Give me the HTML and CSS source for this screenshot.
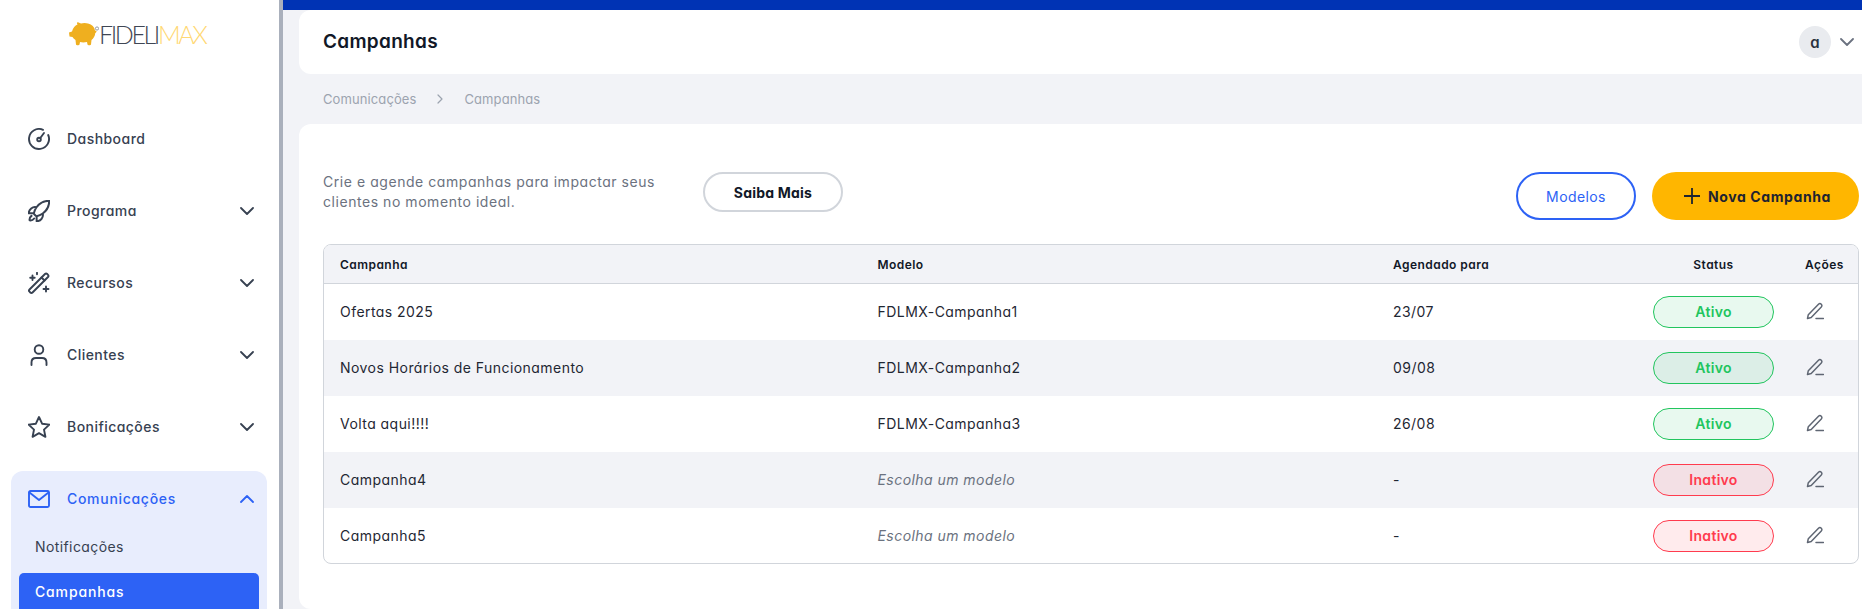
FILE: index.html
```html
<!DOCTYPE html>
<html lang="pt-BR">
<head>
<meta charset="utf-8">
<title>Campanhas</title>
<link rel="stylesheet" href="styles.css">
</head>
<body>
<aside class="sidebar">
  <div class="logo">
    <svg class="pig" width="31" height="24" viewBox="0 0 31 24"><path fill="#efaf1f" d="M1 10.500 4 9.500C5 6 7 3.500 9.500 2.500 8.500 1 9 0 10.500 .5L13 1.500C15 .8 18 .8 20 1.500 24 2.500 26.500 5 27 8.500L28.500 9C28.500 10 28 10.700 27.300 11 27 14 25.500 16.500 23.500 18L23 22.500C23 23.500 19.500 23.500 19.500 22.500L19 20C16.500 20.500 14 20.500 12 20L11.500 22.500C11.500 23.500 8 23.500 8 22.500L7.500 18C6 17 5 16 4.500 15L1.500 14.500Z"/><circle cx="29" cy="6.500" r="1.600" fill="none" stroke="#6b7280" stroke-width=".7"/></svg>
    <span class="logo-text"><span class="logo-dark">FIDELI</span><span class="logo-gold">MAX</span></span>
  </div>
  <nav class="menu">
    <a class="menu-item">
      <svg class="ico" viewBox="0 0 22 22"><path d="M15 1.800A10 10 0 1 0 20.200 7"/><circle cx="11" cy="11.500" r="1.800"/><path d="M12.300 10 16 5"/></svg>
      <span class="label">Dashboard</span>
    </a>
    <a class="menu-item">
      <svg class="ico" viewBox="1.500 1.500 21 21"><path d="M15.590 14.370a6 6 0 0 1-5.840 7.380v-4.800m5.840-2.580a14.980 14.980 0 0 0 6.160-12.120A14.980 14.980 0 0 0 9.631 8.410m5.960 5.960a14.926 14.926 0 0 1-5.841 2.580m-.119-8.540a6 6 0 0 0-7.381 5.840h4.800m2.581-5.840a14.927 14.927 0 0 0-2.580 5.840m2.699 2.700c-.103.021-.207.041-.311.060a15.090 15.090 0 0 1-2.448-2.448 14.900 14.900 0 0 1 .060-.312m-2.240 2.390a4.493 4.493 0 0 0-1.757 4.306 4.493 4.493 0 0 0 4.306-1.758"/></svg>
      <span class="label">Programa</span>
      <svg class="chev" viewBox="0 0 14 8"><path d="M1 1l6 6 6-6"/></svg>
    </a>
    <a class="menu-item">
      <svg class="ico" viewBox="0 0 22 22"><path d="M1.500 17.500 17 2c.7-.7 1.500-.7 2.200 0l.8.8c.7.7.7 1.500 0 2.200L4.500 20.500c-.7.7-1.500.7-2.200 0l-.8-.8c-.7-.7-.7-1.500 0-2.200Z"/><path d="M13.500 5.500l3 3"/><path d="M4.500 3.500v4.500M2.200 5.700h4.500M9 .8v1.500M18 14.500v5M15.500 17h5"/></svg>
      <span class="label">Recursos</span>
      <svg class="chev" viewBox="0 0 14 8"><path d="M1 1l6 6 6-6"/></svg>
    </a>
    <a class="menu-item">
      <svg class="ico" viewBox="0 0 22 22"><circle cx="11" cy="5.500" r="4.300"/><path d="M3.500 21v-2.500c0-3 2-4.500 4.500-4.500h6c2.500 0 4.500 1.500 4.500 4.500V21"/></svg>
      <span class="label">Clientes</span>
      <svg class="chev" viewBox="0 0 14 8"><path d="M1 1l6 6 6-6"/></svg>
    </a>
    <a class="menu-item">
      <svg class="ico" viewBox="1 1 22 22"><path d="M12 2l3.100 6.700 7.300.9-5.400 5 1.400 7.200L12 18.200l-6.400 3.600L7 14.600l-5.400-5 7.300-.9z"/></svg>
      <span class="label">Bonificações</span>
      <svg class="chev" viewBox="0 0 14 8"><path d="M1 1l6 6 6-6"/></svg>
    </a>
    <div class="group">
      <a class="menu-item group-head">
        <svg class="ico" viewBox="0 0 22 18"><rect x="1" y="1" width="20" height="16" rx="1.500"/><path d="M1.500 2.500 11 10l9.500-7.500"/></svg>
        <span class="label">Comunicações</span>
        <svg class="chev" viewBox="0 0 14 8"><path d="M1 7l6-6 6 6"/></svg>
      </a>
      <a class="sub">Notificações</a>
      <a class="sub sub-active">Campanhas</a>
    </div>
  </nav>
</aside>
<div class="main">
  <div class="topbar"></div>
  <header class="head">
    <h1 class="title">Campanhas</h1>
    <div class="user">
      <span class="avatar">a</span>
      <svg class="user-chev" viewBox="0 0 14 8"><path d="M1 1l6 6 6-6"/></svg>
    </div>
  </header>
  <div class="crumbs">
    <span>Comunicações</span>
    <svg class="crumb-sep" viewBox="0 0 6 10"><path d="M1 1l4 4-4 4"/></svg>
    <span>Campanhas</span>
  </div>
  <section class="card">
    <div class="toolbar">
      <p class="desc">Crie e agende campanhas para impactar seus clientes no momento ideal.</p>
      <button class="btn-more">Saiba Mais</button>
      <div class="actions">
        <button class="btn-models">Modelos</button>
        <button class="btn-new">
          <svg class="plus" viewBox="0 0 16 16"><path d="M8 0v16M0 8h16"/></svg>
          <span>Nova Campanha</span>
        </button>
      </div>
    </div>
    <div class="table-wrap">
      <table class="table">
        <colgroup><col class="c1"><col class="c2"><col class="c3"><col class="c4"><col class="c5"></colgroup>
        <thead>
          <tr><th>Campanha</th><th>Modelo</th><th>Agendado para</th><th class="center">Status</th><th class="th-act">Ações</th></tr>
        </thead>
        <tbody>
          <tr><td>Ofertas 2025</td><td>FDLMX-Campanha1</td><td>23/07</td><td class="center"><span class="pill on">Ativo</span></td><td class="td-act"><svg class="edit" viewBox="0 0 18 18"><path d="M1.500 16.500l.8-3.800L12.500 2.200c.8-.8 2-.8 2.800 0 .8.800.8 2 0 2.800L5.200 15.500z"/><path d="M10 16.500h7.500"/></svg></td></tr>
          <tr><td>Novos Horários de Funcionamento</td><td>FDLMX-Campanha2</td><td>09/08</td><td class="center"><span class="pill on">Ativo</span></td><td class="td-act"><svg class="edit" viewBox="0 0 18 18"><path d="M1.500 16.500l.8-3.800L12.500 2.200c.8-.8 2-.8 2.800 0 .8.800.8 2 0 2.800L5.200 15.500z"/><path d="M10 16.500h7.500"/></svg></td></tr>
          <tr><td>Volta aqui!!!!</td><td>FDLMX-Campanha3</td><td>26/08</td><td class="center"><span class="pill on">Ativo</span></td><td class="td-act"><svg class="edit" viewBox="0 0 18 18"><path d="M1.500 16.500l.8-3.800L12.500 2.200c.8-.8 2-.8 2.800 0 .8.800.8 2 0 2.800L5.200 15.500z"/><path d="M10 16.500h7.500"/></svg></td></tr>
          <tr><td>Campanha4</td><td class="muted">Escolha um modelo</td><td>-</td><td class="center"><span class="pill off">Inativo</span></td><td class="td-act"><svg class="edit" viewBox="0 0 18 18"><path d="M1.500 16.500l.8-3.800L12.500 2.200c.8-.8 2-.8 2.800 0 .8.800.8 2 0 2.800L5.200 15.500z"/><path d="M10 16.500h7.500"/></svg></td></tr>
          <tr><td>Campanha5</td><td class="muted">Escolha um modelo</td><td>-</td><td class="center"><span class="pill off">Inativo</span></td><td class="td-act"><svg class="edit" viewBox="0 0 18 18"><path d="M1.500 16.500l.8-3.800L12.500 2.200c.8-.8 2-.8 2.800 0 .8.800.8 2 0 2.800L5.200 15.500z"/><path d="M10 16.500h7.500"/></svg></td></tr>
        </tbody>
      </table>
    </div>
  </section>
</div>
</body>
</html>
```
FILE: styles.css
```css
* { box-sizing: border-box; }
html, body { margin: 0; height: 609px; overflow: hidden; }
body {
  display: flex;
  background: #f2f3f7;
  font-family: Inter, "Liberation Sans", sans-serif;
  font-feature-settings: "cv11" 1;
  font-size: 14px;
  color: #1f2937;
}
.sidebar {
  width: 283px;
  flex: none;
  height: 609px;
  overflow: hidden;
  background: #fff;
  border-right: 4px solid #aab0bc;
}
.logo {
  height: 103px;
  padding: 22px 0 0 68px;
  display: flex;
  align-items: flex-start;
}
.pig { display: block; flex: none; }
.logo-text {
  font-family: Lato, sans-serif;
  font-feature-settings: normal;
  font-weight: 300;
  font-size: 25px;
  line-height: 24px;
  letter-spacing: -2.400px;
}
.logo-dark { color: #3f4654; }
.logo-gold { color: #ffd873; }
.menu { display: flex; flex-direction: column; }
.menu-item {
  display: flex;
  align-items: center;
  height: 72px;
  padding: 0 25px 0 28px;
  color: #374151;
  font-weight: 500;
  letter-spacing: .45px;
}
.ico {
  width: 22px;
  height: 22px;
  flex: none;
  fill: none;
  stroke: currentColor;
  stroke-width: 1.900;
  stroke-linecap: round;
  stroke-linejoin: round;
}
.label { margin-left: 17px; flex: 1; padding-bottom: 1px; }
.chev {
  width: 14px;
  height: 8px;
  flex: none;
  fill: none;
  stroke: currentColor;
  stroke-width: 1.800;
  stroke-linecap: round;
  stroke-linejoin: round;
}
.group {
  margin: 8px 12px 0 11px;
  height: 200px;
  background: #e8edfd;
  border-radius: 12px;
}
.group-head {
  height: 56px;
  padding: 0 13px 0 17px;
  color: #2d62f5;
  letter-spacing: .7px;
}
.sub {
  display: flex;
  align-items: center;
  height: 38px;
  margin: 0 8px;
  padding-left: 16px;
  color: #374151;
  letter-spacing: .4px;
}
.sub-active {
  margin-top: 8px;
  height: 60px;
  align-items: flex-start;
  padding-top: 10px;
  background: #2d62f5;
  color: #fff;
  font-weight: 500;
  letter-spacing: .85px;
  border-radius: 5px;
}
.main {
  flex: 1;
  min-width: 0;
  display: flex;
  flex-direction: column;
  height: 609px;
}
.topbar { height: 10px; background: #0033b4; flex: none; }
.head {
  flex: none;
  height: 64px;
  margin-left: 16px;
  padding: 0 8px 0 24px;
  display: flex;
  align-items: center;
  justify-content: space-between;
  background: #fff;
  border-radius: 12px 0 0 12px;
}
.title {
  margin: 0 0 1px;
  font-size: 19px;
  font-weight: 600;
  color: #111827;
  letter-spacing: .3px;
}
.user { display: flex; align-items: center; gap: 9px; }
.avatar {
  width: 32px;
  height: 32px;
  border-radius: 50%;
  background: #e9ebef;
  display: flex;
  align-items: center;
  justify-content: center;
  font-weight: 600;
  color: #2a3240;
  font-size: 15px;
}
.user-chev {
  width: 14px;
  height: 8px;
  fill: none;
  stroke: #6b7280;
  stroke-width: 1.800;
  stroke-linecap: round;
  stroke-linejoin: round;
}
.crumbs {
  flex: none;
  height: 50px;
  margin-left: 40px;
  display: flex;
  align-items: center;
  gap: 21px;
  font-size: 13px;
  letter-spacing: .1px;
  color: #9ca3af;
}
.crumb-sep {
  width: 6px;
  height: 10px;
  fill: none;
  stroke: #9ca3af;
  stroke-width: 1.200;
  stroke-linecap: round;
  stroke-linejoin: round;
}
.card {
  flex: 1;
  margin-left: 16px;
  padding: 48px 3px 0 24px;
  background: #fff;
  border-radius: 12px 0 0 12px;
}
.toolbar {
  display: flex;
  align-items: flex-start;
  height: 48px;
  margin-bottom: 24px;
}
.desc {
  width: 380px;
  margin: 0;
  flex: none;
  line-height: 20px;
  color: #6b7280;
  letter-spacing: .55px;
  padding-right: 40px;
}
button {
  font-family: inherit;
  font-feature-settings: inherit;
  font-size: 14px;
  cursor: pointer;
  white-space: nowrap;
}
.btn-more {
  width: 140px;
  height: 40px;
  border: 2px solid #d1d5db;
  border-radius: 20px;
  background: #fff;
  font-weight: 700;
  color: #111827;
  letter-spacing: .2px;
}
.actions { margin-left: auto; display: flex; gap: 16px; }
.btn-models {
  width: 120px;
  height: 48px;
  border: 2px solid #2d62f5;
  border-radius: 24px;
  background: #fff;
  color: #2d62f5;
  letter-spacing: .4px;
}
.btn-new {
  width: 207px;
  height: 48px;
  border: 0;
  border-radius: 24px;
  background: #ffb600;
  color: #1f2430;
  font-weight: 700;
  display: flex;
  align-items: center;
  gap: 8px;
  padding: 0 0 0 32px;
  letter-spacing: .6px;
}
.plus {
  width: 16px;
  height: 16px;
  fill: none;
  stroke: #1f2430;
  stroke-width: 1.800;
  flex: none;
}
.table-wrap {
  height: 320px;
  border: 1px solid #d1d5db;
  border-radius: 8px;
  overflow: hidden;
}
.table {
  width: 100%;
  table-layout: fixed;
  border-collapse: separate;
  border-spacing: 0;
}
.c1 { width: 537.500px; }
.c2 { width: 515.500px; }
.c4 { width: 153px; }
.c5 { width: 68px; }
th {
  height: 39px;
  padding: 0 0 0 16px;
  background: #f2f3f7;
  border-bottom: 1px solid #d1d5db;
  text-align: left;
  font-size: 12px;
  font-weight: 600;
  color: #111827;
  letter-spacing: .45px;
}
td {
  height: 56px;
  padding: 0 0 2px 16px;
  color: #1f2733;
  letter-spacing: .45px;
}
tbody tr:nth-child(even) td { background: #f2f3f7; }
th.center, td.center { text-align: center; padding: 0; }
.th-act { padding-left: 15px; }
.td-act { padding-left: 16px; line-height: 0; }
.muted { color: #6b7280; font-style: italic; }
.pill {
  display: inline-flex;
  width: 121px;
  height: 32px;
  align-items: center;
  justify-content: center;
  border-radius: 16px;
  font-weight: 600;
  letter-spacing: .3px;
  vertical-align: middle;
  padding-bottom: 1px;
}
.on { color: #22c55e; border: 1px solid #22c55e; background: rgba(34, 197, 94, .1); }
.off { color: #ff3b4e; border: 1px solid #ff3b4e; background: rgba(255, 59, 78, .1); }
.edit {
  width: 18px;
  height: 18px;
  fill: none;
  stroke: #5f6673;
  stroke-width: 1.500;
  stroke-linecap: round;
  stroke-linejoin: round;
}
```
